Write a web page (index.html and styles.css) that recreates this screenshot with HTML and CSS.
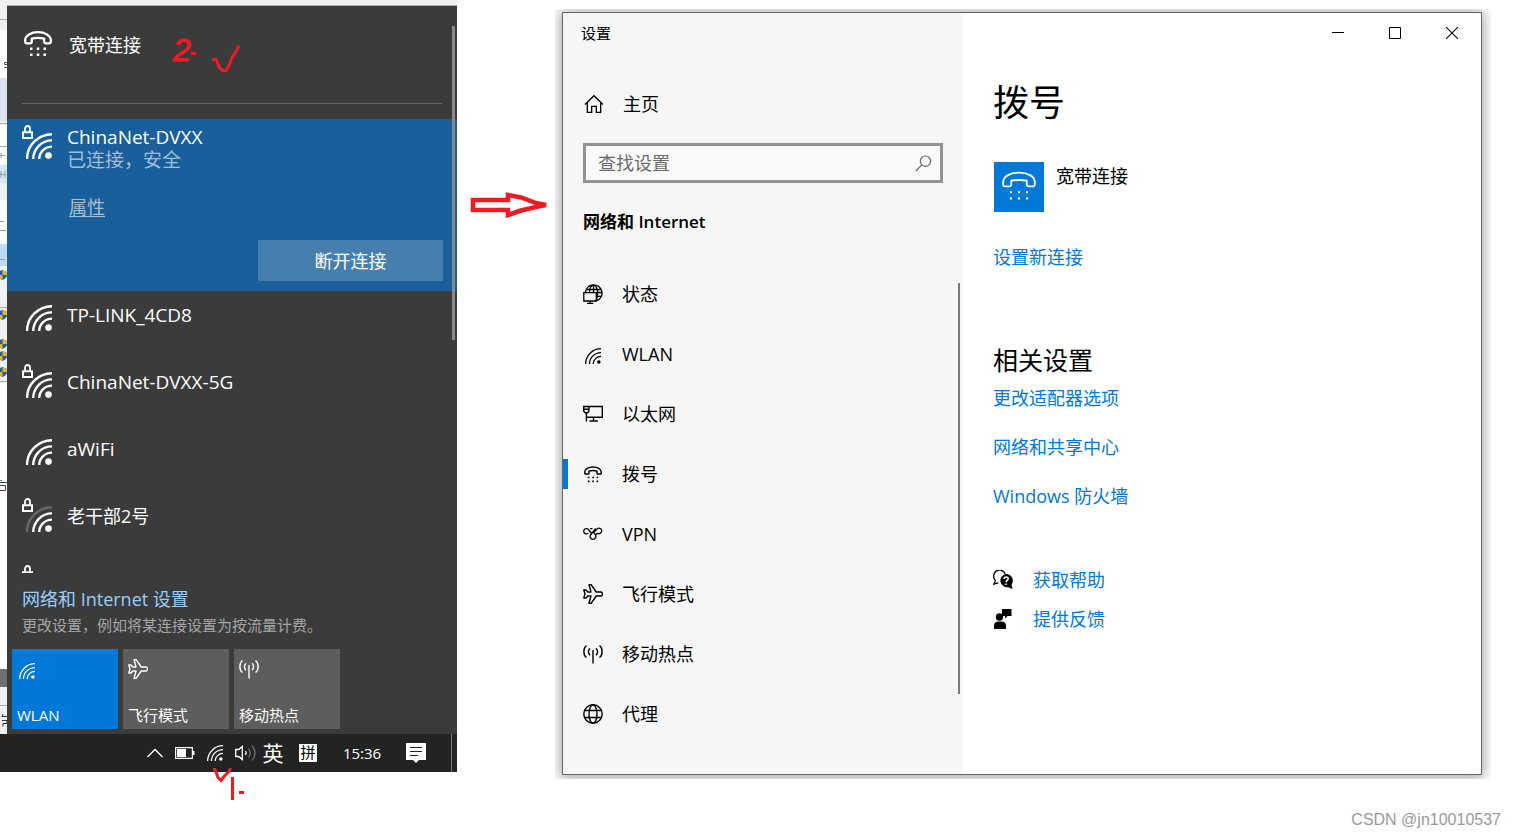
FILE: index.html
```html
<!DOCTYPE html>
<html lang="zh-CN">
<head>
<meta charset="utf-8">
<meta name="viewport" content="width=device-width, initial-scale=1">
<title>设置 - 拨号</title>
<link rel="stylesheet" href="styles.css">
</head>
<body>
<svg class="sprite" aria-hidden="true">
  <symbol id="wifi" viewBox="0 0 26 26"><path d="M1 26A25 25 0 0 1 26 1.200M7.200 26A18.800 18.800 0 0 1 26 7.400M13.200 26A12.800 12.800 0 0 1 26 13.600" fill="none" stroke="currentColor" stroke-width="2.400"/><circle cx="22.500" cy="22.600" r="3.300" fill="currentColor"/></symbol>
  <symbol id="wifi-weak" viewBox="0 0 26 26"><path d="M1 26A25 25 0 0 1 26 1.200" fill="none" stroke="#666" stroke-width="2.400"/><path d="M7.200 26A18.800 18.800 0 0 1 26 7.400M13.200 26A12.800 12.800 0 0 1 26 13.600" fill="none" stroke="currentColor" stroke-width="2.400"/><circle cx="22.500" cy="22.600" r="3.300" fill="currentColor"/></symbol>
  <symbol id="wifi-thin" viewBox="0 0 26 26"><path d="M1 26A25 25 0 0 1 26 1.200M7.200 26A18.800 18.800 0 0 1 26 7.400M13.200 26A12.800 12.800 0 0 1 26 13.600" fill="none" stroke="currentColor" stroke-width="2"/><circle cx="22.500" cy="22.800" r="2.900" fill="currentColor"/></symbol>
  <symbol id="lock" viewBox="0 0 11 14"><path d="M3 6.500V3.800a2.500 2.800 0 0 1 5 0V6.500" fill="none" stroke="currentColor" stroke-width="1.800"/><path d="M1 7.300h9v5.700H1z" fill="none" stroke="currentColor" stroke-width="2"/></symbol>
  <symbol id="phone-bold" viewBox="0 0 28 26"><path d="M1.200 9C1.200 4.500 7 1.200 14 1.200S26.800 4.500 26.800 9v2q0 1.300-1.300 1.300h-4q-1.300 0-1.300-1.300V7.700Q14 6 7.800 7.700V11q0 1.300-1.300 1.300h-4Q1.200 12.300 1.200 11z" fill="none" stroke="currentColor" stroke-width="2.300" stroke-linejoin="round"/><path d="M6 16.500h2.500V19H6zM12.800 16.500h2.500V19h-2.500zM19.500 16.500H22V19h-2.500zM6 22.500h2.500V25H6zM12.800 22.500h2.500V25h-2.500zM19.500 22.500H22V25h-2.500z" fill="currentColor"/></symbol>
  <symbol id="phone" viewBox="0 0 28 26"><path d="M1 9C1 4 7 1.200 14 1.200S27 4 27 9v2.200q0 1.300-1.300 1.300h-4q-1.300 0-1.300-1.300V7.700Q14 6.800 7.600 7.700v3.500q0 1.300-1.300 1.300h-4Q1 12.500 1 11.200z" fill="none" stroke="currentColor" stroke-width="1.500" stroke-linejoin="round"/><path d="M6.500 16.500h1.700v1.700H6.500zM13.100 16.500h1.700v1.700h-1.700zM19.800 16.500h1.700v1.700h-1.700zM6.500 21.500h1.700v1.700H6.500zM13.100 21.500h1.700v1.700h-1.700zM19.800 21.500h1.700v1.700h-1.700z" fill="currentColor"/></symbol>
  <symbol id="plane" viewBox="0 0 20 20"><path d="M6 .8h2.300L13.200 8H18q1.400 0 1.400 2T18 12h-4.800L8.300 19.200H6L8 12H4.800L3 14H.8L2 10 .8 6H3l1.800 2H8z" fill="none" stroke="currentColor" stroke-width="1.400" stroke-linejoin="round"/></symbol>
  <symbol id="hotspot" viewBox="0 0 20 20"><path d="M10 6v13.500M7 4.300a4.500 4.500 0 0 0 0 6.800M13 4.300a4.500 4.500 0 0 1 0 6.800M3.500 1.500C0 4 0 11 3.500 13.500M16.500 1.500c3.500 2.500 3.500 9.500 0 12" fill="none" stroke="currentColor" stroke-width="1.400"/></symbol>
  <symbol id="home" viewBox="0 0 20 20"><path d="M1 10.500 10 1.700l9 8.800M3.300 8.800v9.600h4.400v-6h4.600v6h4.400V8.800" fill="none" stroke="currentColor" stroke-width="1.300"/></symbol>
  <symbol id="status" viewBox="0 0 20 20"><path d="M2.400 8.700A8.300 8.300 0 1 1 14 16.700M2.800 5.500h14.500M14 12.300h3.800M6.500 8C6.500 4 8.300 1 10.500 1s4.200 3.600 4.200 8c0 3-.5 5.500-1.300 7M10.500 1v7.500M13.500 8.500h5M.8 8.700h12.500v8.300H.8zM7 17v2.600M4 19.500h6.300" fill="none" stroke="currentColor" stroke-width="1.300"/></symbol>
  <symbol id="ethernet" viewBox="0 0 20 20"><path d="M6 2.500h13.300v10.700H4M10.500 13.500v3.300M6.500 17h8.300M.7 2.500h5.200v4.700L4.500 8.800H2.200L.7 7.200zM.7 5.200h5M3.400 9v8.500" fill="none" stroke="currentColor" stroke-width="1.400"/></symbol>
  <symbol id="vpn" viewBox="0 0 20 20"><path d="M8.500 9.500 5.700 5.800A2.700 2.700 0 1 0 5.200 9.300M7 4.700h2.500M12.700 4.500 8 10.500a2.800 2.800 0 1 0 4.200.2L10.800 8.500M10.500 8.900 14 5a2.700 2.700 0 1 1 .5 4.200L12.500 11" fill="none" stroke="currentColor" stroke-width="1.300"/></symbol>
  <symbol id="globe" viewBox="0 0 20 20"><g fill="none" stroke="currentColor" stroke-width="1.400"><circle cx="10" cy="10" r="9.200"/><ellipse cx="10" cy="10" rx="4" ry="9.200"/><path d="M1.500 6.500h17M1.500 13.500h17"/></g></symbol>
  <symbol id="shield" viewBox="0 0 9 10"><path d="M4.500 0 9 2v3q0 3-4.500 5Q0 8 0 5V2z" fill="#1f5f9f"/><path d="M4.500 0 9 2v3H4.500zM0 5h4.500v5Q0 8 0 5z" fill="#e6b42c"/></symbol>
</svg>

<main class="scene">
  <section class="desktop">
    <svg class="backdrop" viewBox="0 0 7 734" preserveAspectRatio="none" aria-hidden="true">
      <path fill="#f1f1f1" d="M0 0h7v734H0z"/>
      <path fill="#fff" d="M0 30h7v48H0zM0 125h7v40H0zM0 200h7v44H0zM0 383h7v286H0z"/>
      <path fill="#dce3ee" d="M0 78h7v43H0z"/><path fill="#d5e7f5" d="M0 165h7v18H0z"/>
      <path fill="#bcdcf5" d="M0 244h7v22H0z"/><path fill="#6f6f6f" d="M0 669h7v18H0z"/>
      <path stroke="#aaa" d="M0 19.500h7M0 123.500h7M0 146.500h7M0 307.500h7M0 381.500h7M0 705.500h7"/>
      <path stroke="#999" d="M0 155.500h5M1 153v5M0 174.500h6M1 171v7M5 171v7M0 221.500h4M0 230.500h6M0 259.500h5"/>
      <path stroke="#555" fill="none" d="M7 62.500H4.500v2H7M4 67.500h3"/>
      <path stroke="#4583c4" d="M0 480.500h2"/><path stroke="#444" fill="none" d="M0 482.500h7M0 485.500h5.500v5H0"/>
      <path stroke="#333" fill="none" d="M3 714l-1 3M2 716.500h5M2 720.500h5v3H3v3"/>
      <use href="#shield" x="-2" y="270" width="9" height="10"/><use href="#shield" x="-2" y="310" width="9" height="10"/>
      <use href="#shield" x="-2" y="339" width="9" height="10"/><use href="#shield" x="-2" y="351" width="9" height="10"/>
      <use href="#shield" x="-2" y="367" width="9" height="10"/>
    </svg>

    <div class="flyout">
      <div class="networks">
        <button class="dialup" type="button"><svg class="dialup-icon"><use href="#phone-bold"/></svg><span>宽带连接</span></button>
        <div class="connected">
          <span class="signal"><svg class="lock"><use href="#lock"/></svg><svg class="bars"><use href="#wifi"/></svg></span>
          <div class="connected-info">
            <span class="ssid">ChinaNet-DVXX</span>
            <span class="state">已连接，安全</span>
            <a class="properties" href="#">属性</a>
          </div>
          <button class="disconnect" type="button">断开连接</button>
        </div>
        <button class="network" type="button"><span class="signal"><svg class="bars"><use href="#wifi"/></svg></span><span class="ssid">TP-LINK_4CD8</span></button>
        <button class="network" type="button"><span class="signal"><svg class="lock"><use href="#lock"/></svg><svg class="bars"><use href="#wifi"/></svg></span><span class="ssid">ChinaNet-DVXX-5G</span></button>
        <button class="network" type="button"><span class="signal"><svg class="bars"><use href="#wifi"/></svg></span><span class="ssid">aWiFi</span></button>
        <button class="network" type="button"><span class="signal"><svg class="lock"><use href="#lock"/></svg><svg class="bars"><use href="#wifi-weak"/></svg></span><span class="ssid-cjk">老干部2号</span></button>
        <div class="network-peek"><svg class="lock"><use href="#lock"/></svg></div>
        <div class="flyout-scroll"></div>
      </div>
      <div class="flyout-footer">
        <a class="net-settings" href="#">网络和 Internet 设置</a>
        <p class="net-hint">更改设置，例如将某连接设置为按流量计费。</p>
      </div>
      <div class="tiles">
        <button class="tile tile-on" type="button"><svg class="tile-wifi"><use href="#wifi-thin"/></svg><span>WLAN</span></button>
        <button class="tile" type="button"><svg><use href="#plane"/></svg><span>飞行模式</span></button>
        <button class="tile" type="button"><svg><use href="#hotspot"/></svg><span>移动热点</span></button>
      </div>
    </div>

    <div class="taskbar">
      <button type="button" aria-label="显示隐藏的图标"><svg width="16" height="10" viewBox="0 0 16 10"><path d="M.5 9 8 1.500 15.500 9" fill="none" stroke="#fff" stroke-width="1.300"/></svg></button>
      <button type="button" aria-label="电池"><svg width="20" height="12" viewBox="0 0 20 12"><path d="M.6.600h16.800v10.800H.6z" fill="none" stroke="#fff" stroke-width="1.200"/><path d="M2 2h9v8H2zM18 4h1.500v4H18z" fill="#fff"/></svg></button>
      <button type="button" aria-label="网络"><svg width="16" height="16"><use href="#wifi-thin"/></svg></button>
      <button type="button" aria-label="音量"><svg width="21" height="18" viewBox="0 0 21 18"><path d="M.7 5.500h3L7.300 2.500v13L3.700 12.500h-3z" fill="none" stroke="#fff" stroke-width="1.300"/><path d="M10.500 7q1.400 2 0 4" fill="none" stroke="#fff" stroke-width="1.300"/><path d="M13.500 4.500q3.500 4.500 0 9M17 1.500q6 7.500 0 15" fill="none" stroke="#777" stroke-width="1.200"/></svg></button>
      <button class="lang" type="button">英</button>
      <button class="ime" type="button"><span>拼</span></button>
      <button class="clock" type="button">15:36</button>
      <button class="notify" type="button" aria-label="通知"><svg width="20" height="20" viewBox="0 0 20 20"><path d="M0 0h20v17h-7l-3 3-3-3H0z" fill="#fff"/><path d="M4 4.500h12M4 8.500h12M4 12.500h8" stroke="#222" stroke-width="1.200"/></svg></button>
      <span class="show-desktop"></span>
    </div>

    <span class="mark-two">2</span>
    <svg class="mark-check" width="50" height="30" viewBox="0 0 50 30" aria-hidden="true"><path d="M1 9.500h5M22 15.500h4l3 7 3 4h4l3-5 3-8 4-6 3-6" fill="none" stroke="#ed1c24" stroke-width="3"/></svg>
    <svg class="mark-one" width="34" height="34" viewBox="0 0 34 34" aria-hidden="true"><path d="M1 2.500h2l3 8 3 3 3-4 6-6V1M20.500 10v23M27 25.500h5" fill="none" stroke="#ed1c24" stroke-width="3"/></svg>
  </section>

  <div class="pointer"><svg width="78" height="26" viewBox="0 0 78 26" aria-hidden="true"><path d="M3 8h35V3l13 2.500L66 11l10 2-10 2-15 3.500L38 23v-5H3z" fill="none" stroke="#ed1c24" stroke-width="4.500"/></svg></div>

  <div class="window-frame">
    <section class="window">
      <aside class="sidebar">
        <p class="window-title">设置</p>
        <a class="home" href="#"><svg class="nav-icon"><use href="#home"/></svg><span>主页</span></a>
        <div class="search">
          <input type="text" placeholder="查找设置" aria-label="查找设置">
          <svg width="17" height="17" viewBox="0 0 17 17" aria-hidden="true"><circle cx="10.500" cy="6.200" r="5.200" fill="none" stroke="#666" stroke-width="1.200"/><path d="M6.800 9.900.8 16" stroke="#666" stroke-width="1.200"/></svg>
        </div>
        <h2 class="group-title">网络和 Internet</h2>
        <nav class="nav">
          <a href="#"><svg class="nav-icon"><use href="#status"/></svg><span>状态</span></a>
          <a href="#"><svg class="nav-icon nav-wifi"><use href="#wifi-thin"/></svg><span>WLAN</span></a>
          <a href="#"><svg class="nav-icon"><use href="#ethernet"/></svg><span>以太网</span></a>
          <a class="current" href="#" aria-current="page"><svg class="nav-icon nav-phone"><use href="#phone-bold"/></svg><span>拨号</span></a>
          <a href="#"><svg class="nav-icon"><use href="#vpn"/></svg><span>VPN</span></a>
          <a href="#"><svg class="nav-icon"><use href="#plane"/></svg><span>飞行模式</span></a>
          <a href="#"><svg class="nav-icon"><use href="#hotspot"/></svg><span>移动热点</span></a>
          <a href="#"><svg class="nav-icon"><use href="#globe"/></svg><span>代理</span></a>
        </nav>
        <div class="nav-scroll"></div>
      </aside>
      <div class="content">
        <div class="caption">
          <button type="button" aria-label="最小化"><svg width="12" height="12" viewBox="0 0 12 12"><path d="M0 5.500h12" stroke="#000"/></svg></button>
          <button type="button" aria-label="最大化"><svg width="12" height="12" viewBox="0 0 12 12"><path d="M.5.500h11v11H.5z" fill="none" stroke="#000"/></svg></button>
          <button type="button" aria-label="关闭"><svg width="12" height="12" viewBox="0 0 12 12"><path d="M0 0l12 12M12 0 0 12" stroke="#000" stroke-width="1.100"/></svg></button>
        </div>
        <h1>拨号</h1>
        <button class="connection" type="button"><span class="connection-icon"><svg width="34" height="32"><use href="#phone"/></svg></span><span class="connection-name">宽带连接</span></button>
        <a class="new-link" href="#">设置新连接</a>
        <h2 class="related-title">相关设置</h2>
        <ul class="related">
          <li><a href="#">更改适配器选项</a></li>
          <li><a href="#">网络和共享中心</a></li>
          <li><a href="#">Windows 防火墙</a></li>
        </ul>
        <ul class="support">
          <li><svg width="20" height="20" viewBox="0 0 20 20" aria-hidden="true"><path d="M2.500 10.500A6 6 0 1 1 12.200 4M2.500 10.500.8 14l4.500-1.200" fill="none" stroke="#000" stroke-width="1.300"/><path d="M13 4a6.600 6.600 0 0 1 5.500 10.500l1 4.500-4.300-1.800A6.600 6.600 0 1 1 13 4z"/><path d="M11 9q.2-2 2.200-2t2 1.800q0 1-1.200 1.700-.9.500-.9 1.700M13.100 13.500V15" fill="none" stroke="#fff" stroke-width="1.500"/></svg><a href="#">获取帮助</a></li>
          <li><svg width="20" height="20" viewBox="0 0 20 20" aria-hidden="true"><path d="M9 0h9.500v7h-4L12 9.500V7H9z"/><circle cx="6.500" cy="8" r="3.700"/><path d="M1 20v-3q0-4.500 4.500-4.500h3q4.500 0 4.500 4.500v3z"/></svg><a href="#">提供反馈</a></li>
        </ul>
      </div>
    </section>
  </div>
</main>
<footer class="watermark">CSDN @jn10010537</footer>
</body>
</html>
```

FILE: styles.css
```css
* { box-sizing: border-box; }

body {
  margin: 0;
  background: #fff;
  color: #000;
  font: 18px/24px "Open Sans", "Noto Sans CJK SC", sans-serif;
}

h1, h2, p, ul { margin: 0; padding: 0; }
ul { list-style: none; }
a { color: inherit; text-decoration: none; }
svg { display: block; flex: none; }

button {
  margin: 0;
  padding: 0;
  border: 0;
  background: none;
  color: inherit;
  font: inherit;
  text-align: left;
}

.sprite { position: absolute; width: 0; height: 0; }

.scene {
  display: grid;
  grid-template-columns: 457px 98px minmax(720px, 1fr);
  align-items: start;
  padding-right: 25px;
}

/* Desktop with the network flyout */
.desktop {
  position: relative;
  display: grid;
  grid-template-columns: 7px 1fr;
  background: #f0f0f0;
}

.backdrop { width: 7px; height: 100%; }

.flyout {
  margin-top: 5px;
  padding-bottom: 5px;
  border-top: 1px solid #a5aaa5;
  background: #3b3b3b;
  color: #fff;
}

.networks { position: relative; }

.dialup {
  display: flex;
  width: calc(100% - 30px);
  height: 98px;
  margin: 0 15px 15px;
  padding: 25px 0 0 2px;
  gap: 17px;
  border-bottom: 1px solid #646464;
}

.dialup span { line-height: 28px; }
.dialup-icon { width: 28px; height: 26px; }

.connected {
  display: grid;
  grid-template-columns: 45px 1fr;
  padding: 6px 14px 10px 15px;
  background: #195f9b;
}

.signal {
  flex: none;
  position: relative;
  width: 45px;
  height: 34px;
  padding: 8px 0 0 4px;
}

.bars { width: 26px; height: 26px; }
.lock { width: 11px; height: 14px; }
.signal .lock { position: absolute; top: 0; left: 0; }
.connected-info { display: flex; flex-direction: column; align-items: flex-start; }
.ssid { font-size: 19px; }
.state { color: #a3bfd7; font-size: 19px; line-height: 22px; }

.properties {
  margin: 24px 0 21px 2px;
  color: #a3bfd7;
  text-decoration: underline;
  text-underline-offset: 2px;
}

.disconnect {
  grid-column: 1 / -1;
  justify-self: end;
  width: 185px;
  height: 41px;
  background: #467fae;
  text-align: center;
}

.network {
  display: flex;
  width: 100%;
  height: 67px;
  padding: 6px 15px;
}

.network .ssid, .network .ssid-cjk { padding-top: 6px; }
.network-peek { height: 14px; padding: 6px 15px 0; overflow: hidden; }

.flyout-scroll {
  position: absolute;
  top: 20px;
  right: 2px;
  width: 3px;
  height: 314px;
  background: #888;
}

.flyout-footer { padding: 14px 15px 12px; }
.net-settings { display: block; color: #99cffa; }
.net-hint { padding-top: 2px; color: #a5a5a5; font-size: 15px; }
.tiles { display: flex; gap: 5px; padding-left: 5px; }

.tile {
  display: flex;
  flex-direction: column;
  justify-content: space-between;
  width: 106px;
  height: 80px;
  padding: 10px 5px 2px;
  background: #5d5d5d;
  font-size: 15px;
}

.tile svg { width: 20px; height: 20px; }
.tile .tile-wifi { width: 16px; height: 16px; margin: 4px 2px 0; }
.tile-on { background: #0078d7; }

.taskbar {
  grid-column: 1 / -1;
  display: flex;
  align-items: stretch;
  justify-content: flex-end;
  height: 38px;
  padding-right: 5px;
  background: #232323;
  color: #fff;
}

.taskbar button { display: flex; align-items: center; justify-content: center; width: 30px; }
.taskbar .lang { width: 26px; font-size: 21px; }
.taskbar .ime { width: 44px; }
.ime span { width: 18px; height: 18px; background: #fff; color: #000; font-size: 15px; line-height: 16px; text-align: center; }
.taskbar .clock { width: 64px; font-size: 15px; }
.taskbar .notify { width: 44px; }
.show-desktop { margin-left: 13px; border-left: 1px solid #777; }

/* Red pen marks drawn over the desktop */
.mark-two, .mark-check, .mark-one { position: absolute; }
.mark-two { top: 32px; left: 173px; color: #ed1c24; font: italic 32px/36px "Liberation Sans", sans-serif; -webkit-text-stroke: 1px #ed1c24; }
.mark-check { top: 44px; left: 190px; }
.mark-one { top: 767px; left: 212px; }

.pointer { padding: 192px 0 0 13px; }

/* Settings window */
.window-frame { margin-top: 9px; padding: 3px 9px 4px 7px; overflow: hidden; }

.window {
  display: grid;
  grid-template-columns: 400px 1fr;
  border: 1px solid #666;
  background: #fff;
  box-shadow: 0 1px 12px 2px rgba(0, 0, 0, 0.35);
}

.sidebar { position: relative; padding-bottom: 30px; background: #f6f6f6; }
.window-title { padding: 8px 18px; font-size: 15px; }
.home { display: flex; align-items: center; gap: 19px; height: 60px; margin-top: 21px; padding-left: 21px; }
.nav-icon { width: 20px; height: 20px; }

.search {
  display: flex;
  align-items: center;
  height: 40px;
  margin: 9px 20px 0;
  padding: 0 8px 0 12px;
  border: 3px solid #929292;
  background: #fafafa;
}

.search input {
  flex: 1;
  min-width: 0;
  padding: 0;
  border: 0;
  outline: 0;
  background: none;
  font: inherit;
}

.search input::placeholder { color: #6b6b6b; opacity: 1; }
.group-title { margin: 27px 20px 30px; font-size: 17px; line-height: 24px; font-weight: 600; }
.nav a { display: flex; align-items: center; gap: 19px; height: 60px; padding-left: 20px; }
.nav .nav-wifi { width: 16px; height: 16px; margin: 4px 2px 0; }
.nav .nav-phone { width: 18px; height: 17px; margin: 0 1px; }
.nav .current { background: linear-gradient(#0078d7, #0078d7) 0 50% / 5px 30px no-repeat; }

.nav-scroll {
  position: absolute;
  top: 270px;
  right: 3px;
  width: 2px;
  height: 411px;
  background: #7a7a7a;
}

.content { padding-left: 30px; }
.caption { display: flex; justify-content: flex-end; padding-right: 1px; }
.caption button { display: flex; align-items: center; justify-content: center; width: 57px; height: 40px; }
h1 { margin: 26px 0 35px; font-size: 36px; line-height: 48px; font-weight: 400; }
.connection { display: flex; gap: 12px; padding-left: 1px; }
.connection-icon { display: flex; align-items: center; justify-content: center; width: 50px; height: 50px; background: #0078d7; color: #fff; }
.connection-name { padding-top: 2px; }
.content a { color: #0078d7; }
.new-link { display: block; margin-top: 33px; }
.related-title { margin-top: 74px; font-size: 25px; line-height: 34px; font-weight: 400; }
.related { display: grid; gap: 25px; padding-top: 9px; }
.support { display: grid; gap: 15px; padding-top: 60px; }
.support li { display: flex; align-items: center; gap: 20px; }

.watermark {
  padding: 29px 15px 6px;
  color: #999;
  font: 16px/24px "Liberation Sans", sans-serif;
  text-align: right;
}
```
